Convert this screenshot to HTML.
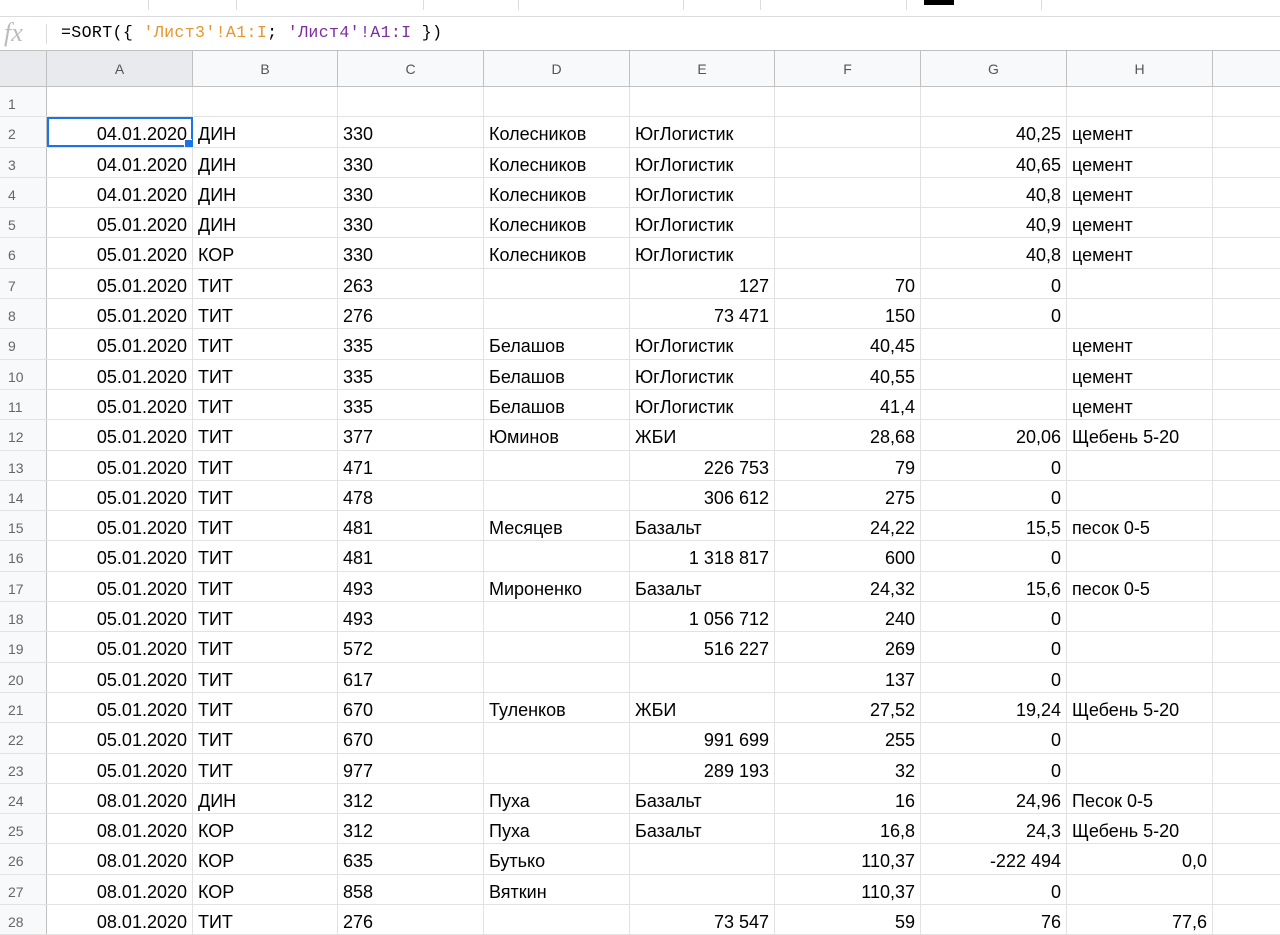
<!DOCTYPE html>
<html><head><meta charset="utf-8"><style>
*{margin:0;padding:0;box-sizing:border-box}
body{width:1280px;height:928px;overflow:hidden;background:#fff;font-family:"Liberation Sans",Arial,sans-serif;position:relative}
.tb{position:absolute;left:0;top:0;width:1280px;height:17px;border-bottom:1px solid #dadce0}
.sep{position:absolute;top:0;width:1px;height:10px;background:#dadce0}
.fb{position:absolute;left:0;top:17px;width:1280px;height:34px;border-bottom:1px solid #c0c0c0}
.fx{position:absolute;left:4px;top:1px;font-family:"Liberation Serif",serif;font-style:italic;font-size:26px;color:#bbb}
.fxs{position:absolute;left:46px;top:7px;width:1px;height:20px;background:#dadce0}
.formula{position:absolute;left:61px;top:6px;font-family:"Liberation Mono",monospace;font-size:16.6px;color:#000;letter-spacing:0.35px}
.grid{position:absolute;left:0;top:51px;width:1280px}
.r{display:flex;height:30.3px;border-bottom:1px solid #e2e2e2}
.hdr{height:36px;background:#f8f9fa;border-bottom:1px solid #c0c0c0}
.c{flex:none;border-right:1px solid #e2e2e2;font-size:18px;line-height:30px;padding:2px 5px 0;white-space:nowrap;overflow:hidden;color:#000}
.hdr .c{border-right:1px solid #c0c0c0;color:#555;font-size:14px;text-align:center;line-height:36px;padding:0}
.n{width:47px;background:#f8f9fa;border-right:1px solid #c0c0c0;color:#666;font-size:14px;padding-left:8px}
.R{text-align:right}
.w1{width:146px}.w2{width:145px}.w3{width:146px}.w4{width:146px}.w5{width:145px}.w6{width:146px}.w7{width:146px}.w8{width:146px}.w9{width:70px}
.sel{outline:2px solid #1a73e8;outline-offset:-2px;position:relative}
.sel:after{content:"";position:absolute;right:-1px;bottom:-1px;width:7px;height:7px;background:#1a73e8;border:1px solid #fff}
</style></head><body>
<div class="tb">
<div class="sep" style="left:148px"></div><div class="sep" style="left:236px"></div><div class="sep" style="left:423px"></div><div class="sep" style="left:518px"></div><div class="sep" style="left:683px"></div><div class="sep" style="left:760px"></div><div class="sep" style="left:906px"></div><div class="sep" style="left:1041px"></div>
<div style="position:absolute;left:924px;top:0;width:30px;height:5px;background:#000"></div>
</div>
<div class="fb"><span class="fx">fx</span><div class="fxs"></div>
<div class="formula">=SORT({ <span style="color:#e8962f">'Лист3'!A1:I</span>; <span style="color:#7b2fa0">'Лист4'!A1:I</span> })</div></div>
<div class="grid">
<div class="r hdr"><div class="c n" style="background:#e8eaed"></div><div class="c w1" style="background:#e8eaed">A</div><div class="c w2">B</div><div class="c w3">C</div><div class="c w4">D</div><div class="c w5">E</div><div class="c w6">F</div><div class="c w7">G</div><div class="c w8">H</div><div class="c w9"></div></div>
<div class="r"><div class="c n">1</div><div class="c w1"></div><div class="c w2"></div><div class="c w3"></div><div class="c w4"></div><div class="c w5"></div><div class="c w6"></div><div class="c w7"></div><div class="c w8"></div><div class="c w9"></div></div>
<div class="r"><div class="c n">2</div><div class="c w1 R sel">04.01.2020</div><div class="c w2">ДИН</div><div class="c w3">330</div><div class="c w4">Колесников</div><div class="c w5">ЮгЛогистик</div><div class="c w6"></div><div class="c w7 R">40,25</div><div class="c w8">цемент</div><div class="c w9"></div></div>
<div class="r"><div class="c n">3</div><div class="c w1 R">04.01.2020</div><div class="c w2">ДИН</div><div class="c w3">330</div><div class="c w4">Колесников</div><div class="c w5">ЮгЛогистик</div><div class="c w6"></div><div class="c w7 R">40,65</div><div class="c w8">цемент</div><div class="c w9"></div></div>
<div class="r"><div class="c n">4</div><div class="c w1 R">04.01.2020</div><div class="c w2">ДИН</div><div class="c w3">330</div><div class="c w4">Колесников</div><div class="c w5">ЮгЛогистик</div><div class="c w6"></div><div class="c w7 R">40,8</div><div class="c w8">цемент</div><div class="c w9"></div></div>
<div class="r"><div class="c n">5</div><div class="c w1 R">05.01.2020</div><div class="c w2">ДИН</div><div class="c w3">330</div><div class="c w4">Колесников</div><div class="c w5">ЮгЛогистик</div><div class="c w6"></div><div class="c w7 R">40,9</div><div class="c w8">цемент</div><div class="c w9"></div></div>
<div class="r"><div class="c n">6</div><div class="c w1 R">05.01.2020</div><div class="c w2">КОР</div><div class="c w3">330</div><div class="c w4">Колесников</div><div class="c w5">ЮгЛогистик</div><div class="c w6"></div><div class="c w7 R">40,8</div><div class="c w8">цемент</div><div class="c w9"></div></div>
<div class="r"><div class="c n">7</div><div class="c w1 R">05.01.2020</div><div class="c w2">ТИТ</div><div class="c w3">263</div><div class="c w4"></div><div class="c w5 R">127</div><div class="c w6 R">70</div><div class="c w7 R">0</div><div class="c w8"></div><div class="c w9"></div></div>
<div class="r"><div class="c n">8</div><div class="c w1 R">05.01.2020</div><div class="c w2">ТИТ</div><div class="c w3">276</div><div class="c w4"></div><div class="c w5 R">73 471</div><div class="c w6 R">150</div><div class="c w7 R">0</div><div class="c w8"></div><div class="c w9"></div></div>
<div class="r"><div class="c n">9</div><div class="c w1 R">05.01.2020</div><div class="c w2">ТИТ</div><div class="c w3">335</div><div class="c w4">Белашов</div><div class="c w5">ЮгЛогистик</div><div class="c w6 R">40,45</div><div class="c w7"></div><div class="c w8">цемент</div><div class="c w9"></div></div>
<div class="r"><div class="c n">10</div><div class="c w1 R">05.01.2020</div><div class="c w2">ТИТ</div><div class="c w3">335</div><div class="c w4">Белашов</div><div class="c w5">ЮгЛогистик</div><div class="c w6 R">40,55</div><div class="c w7"></div><div class="c w8">цемент</div><div class="c w9"></div></div>
<div class="r"><div class="c n">11</div><div class="c w1 R">05.01.2020</div><div class="c w2">ТИТ</div><div class="c w3">335</div><div class="c w4">Белашов</div><div class="c w5">ЮгЛогистик</div><div class="c w6 R">41,4</div><div class="c w7"></div><div class="c w8">цемент</div><div class="c w9"></div></div>
<div class="r"><div class="c n">12</div><div class="c w1 R">05.01.2020</div><div class="c w2">ТИТ</div><div class="c w3">377</div><div class="c w4">Юминов</div><div class="c w5">ЖБИ</div><div class="c w6 R">28,68</div><div class="c w7 R">20,06</div><div class="c w8">Щебень 5-20</div><div class="c w9"></div></div>
<div class="r"><div class="c n">13</div><div class="c w1 R">05.01.2020</div><div class="c w2">ТИТ</div><div class="c w3">471</div><div class="c w4"></div><div class="c w5 R">226 753</div><div class="c w6 R">79</div><div class="c w7 R">0</div><div class="c w8"></div><div class="c w9"></div></div>
<div class="r"><div class="c n">14</div><div class="c w1 R">05.01.2020</div><div class="c w2">ТИТ</div><div class="c w3">478</div><div class="c w4"></div><div class="c w5 R">306 612</div><div class="c w6 R">275</div><div class="c w7 R">0</div><div class="c w8"></div><div class="c w9"></div></div>
<div class="r"><div class="c n">15</div><div class="c w1 R">05.01.2020</div><div class="c w2">ТИТ</div><div class="c w3">481</div><div class="c w4">Месяцев</div><div class="c w5">Базальт</div><div class="c w6 R">24,22</div><div class="c w7 R">15,5</div><div class="c w8">песок 0-5</div><div class="c w9"></div></div>
<div class="r"><div class="c n">16</div><div class="c w1 R">05.01.2020</div><div class="c w2">ТИТ</div><div class="c w3">481</div><div class="c w4"></div><div class="c w5 R">1 318 817</div><div class="c w6 R">600</div><div class="c w7 R">0</div><div class="c w8"></div><div class="c w9"></div></div>
<div class="r"><div class="c n">17</div><div class="c w1 R">05.01.2020</div><div class="c w2">ТИТ</div><div class="c w3">493</div><div class="c w4">Мироненко</div><div class="c w5">Базальт</div><div class="c w6 R">24,32</div><div class="c w7 R">15,6</div><div class="c w8">песок 0-5</div><div class="c w9"></div></div>
<div class="r"><div class="c n">18</div><div class="c w1 R">05.01.2020</div><div class="c w2">ТИТ</div><div class="c w3">493</div><div class="c w4"></div><div class="c w5 R">1 056 712</div><div class="c w6 R">240</div><div class="c w7 R">0</div><div class="c w8"></div><div class="c w9"></div></div>
<div class="r"><div class="c n">19</div><div class="c w1 R">05.01.2020</div><div class="c w2">ТИТ</div><div class="c w3">572</div><div class="c w4"></div><div class="c w5 R">516 227</div><div class="c w6 R">269</div><div class="c w7 R">0</div><div class="c w8"></div><div class="c w9"></div></div>
<div class="r"><div class="c n">20</div><div class="c w1 R">05.01.2020</div><div class="c w2">ТИТ</div><div class="c w3">617</div><div class="c w4"></div><div class="c w5"></div><div class="c w6 R">137</div><div class="c w7 R">0</div><div class="c w8"></div><div class="c w9"></div></div>
<div class="r"><div class="c n">21</div><div class="c w1 R">05.01.2020</div><div class="c w2">ТИТ</div><div class="c w3">670</div><div class="c w4">Туленков</div><div class="c w5">ЖБИ</div><div class="c w6 R">27,52</div><div class="c w7 R">19,24</div><div class="c w8">Щебень 5-20</div><div class="c w9"></div></div>
<div class="r"><div class="c n">22</div><div class="c w1 R">05.01.2020</div><div class="c w2">ТИТ</div><div class="c w3">670</div><div class="c w4"></div><div class="c w5 R">991 699</div><div class="c w6 R">255</div><div class="c w7 R">0</div><div class="c w8"></div><div class="c w9"></div></div>
<div class="r"><div class="c n">23</div><div class="c w1 R">05.01.2020</div><div class="c w2">ТИТ</div><div class="c w3">977</div><div class="c w4"></div><div class="c w5 R">289 193</div><div class="c w6 R">32</div><div class="c w7 R">0</div><div class="c w8"></div><div class="c w9"></div></div>
<div class="r"><div class="c n">24</div><div class="c w1 R">08.01.2020</div><div class="c w2">ДИН</div><div class="c w3">312</div><div class="c w4">Пуха</div><div class="c w5">Базальт</div><div class="c w6 R">16</div><div class="c w7 R">24,96</div><div class="c w8">Песок 0-5</div><div class="c w9"></div></div>
<div class="r"><div class="c n">25</div><div class="c w1 R">08.01.2020</div><div class="c w2">КОР</div><div class="c w3">312</div><div class="c w4">Пуха</div><div class="c w5">Базальт</div><div class="c w6 R">16,8</div><div class="c w7 R">24,3</div><div class="c w8">Щебень 5-20</div><div class="c w9"></div></div>
<div class="r"><div class="c n">26</div><div class="c w1 R">08.01.2020</div><div class="c w2">КОР</div><div class="c w3">635</div><div class="c w4">Бутько</div><div class="c w5"></div><div class="c w6 R">110,37</div><div class="c w7 R">-222 494</div><div class="c w8 R">0,0</div><div class="c w9"></div></div>
<div class="r"><div class="c n">27</div><div class="c w1 R">08.01.2020</div><div class="c w2">КОР</div><div class="c w3">858</div><div class="c w4">Вяткин</div><div class="c w5"></div><div class="c w6 R">110,37</div><div class="c w7 R">0</div><div class="c w8"></div><div class="c w9"></div></div>
<div class="r"><div class="c n">28</div><div class="c w1 R">08.01.2020</div><div class="c w2">ТИТ</div><div class="c w3">276</div><div class="c w4"></div><div class="c w5 R">73 547</div><div class="c w6 R">59</div><div class="c w7 R">76</div><div class="c w8 R">77,6</div><div class="c w9"></div></div>
</div>
</body></html>
